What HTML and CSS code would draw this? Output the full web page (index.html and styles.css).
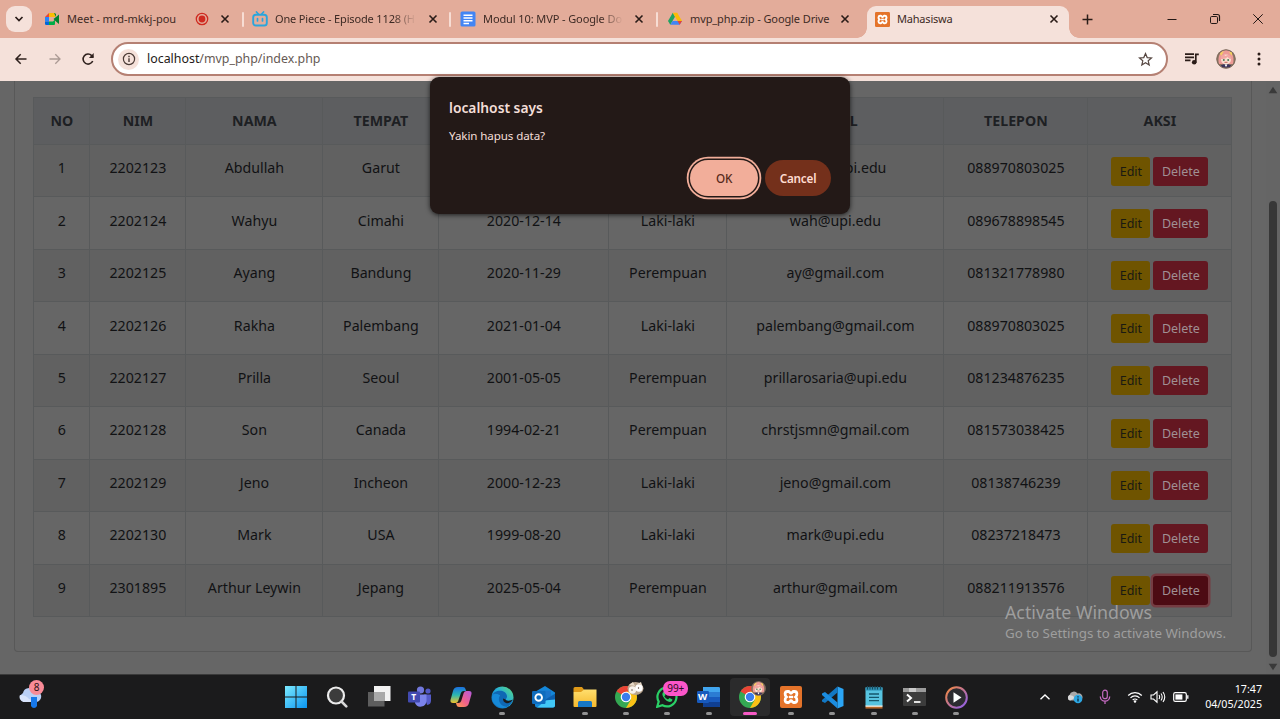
FILE: index.html
```html
<!DOCTYPE html>
<html lang="id">
<head>
<meta charset="utf-8">
<title>Mahasiswa</title>
<link rel="stylesheet" href="styles.css">
</head>
<body>
<svg class="defs" width="0" height="0">
  <defs>
    <linearGradient id="g-win" x1="0" y1="0" x2="1" y2="1"><stop offset="0" stop-color="#7cebff"/><stop offset="1" stop-color="#0a94f0"/></linearGradient>
    <linearGradient id="g-edge" x1="0" y1="1" x2="1" y2="0"><stop offset="0" stop-color="#0c59a4"/><stop offset=".5" stop-color="#1fa7e0"/><stop offset="1" stop-color="#5fe07a"/></linearGradient>
    <linearGradient id="g-cop1" x1="0" y1="0" x2="0" y2="1"><stop offset="0" stop-color="#1b6fe0"/><stop offset=".5" stop-color="#2bb7b0"/><stop offset="1" stop-color="#f0c32b"/></linearGradient>
    <linearGradient id="g-cop2" x1="1" y1="0" x2="0" y2="1"><stop offset="0" stop-color="#b45be0"/><stop offset=".55" stop-color="#f0608a"/><stop offset="1" stop-color="#ffa04a"/></linearGradient>
    <linearGradient id="g-media" x1="0" y1="0" x2="1" y2="1"><stop offset="0" stop-color="#f58a3c"/><stop offset="1" stop-color="#8a5cf0"/></linearGradient>
    <linearGradient id="g-fold" x1="0" y1="0" x2="0" y2="1"><stop offset="0" stop-color="#ffdf6e"/><stop offset="1" stop-color="#f5b92e"/></linearGradient>
    <symbol id="i-x" viewBox="0 0 10 10"><path d="M1.500 1.500l7 7M8.500 1.500l-7 7" stroke="#2a1c18" stroke-width="1.600" fill="none"/></symbol>
    <symbol id="i-xampp" viewBox="0 0 22 22"><rect width="22" height="22" rx="2" fill="#e4732a"/><path d="M7.500 5.500h1c1 0 1.500 1.800 2.500 1.800s1.500-1.800 2.500-1.800h1c3 0 3 4 1 5.500 2 1.500 2 5.500-1 5.500h-1c-1 0-1.500-1.800-2.500-1.800s-1.500 1.800-2.500 1.800h-1c-3 0-3-4-1-5.500-2-1.500-2-5.500 1-5.500z" fill="none" stroke="#fff" stroke-width="2.800"/><path d="M9 11h4" stroke="#fff" stroke-width="2.400"/></symbol>
    <symbol id="i-chrome" viewBox="0 0 22 22"><circle cx="11" cy="11" r="11" fill="#34a853"/><path d="M11 11L1.500 5.500A11 11 0 0 1 20.500 5.500z" fill="#ea4335"/><path d="M11 5.500h9.500A11 11 0 0 1 11 22l4.800-8.200z" fill="#fbc116"/><circle cx="11" cy="11" r="5.300" fill="#fff"/><circle cx="11" cy="11" r="4.200" fill="#3b7ded"/></symbol>
    <symbol id="i-face" viewBox="0 0 20 20"><circle cx="10" cy="10" r="9.500" fill="#8d7563"/><path d="M3 15C1 7 5 1 10 1s9 6 7 14z" fill="#ed9a96"/><path d="M4 4l4-2-3 5zM16 3l-3 0 3 4z" fill="#f5d35e"/><ellipse cx="10" cy="10.500" rx="5" ry="5" fill="#fbe0d0"/><path d="M4.500 10c1-5 3-5 5-3 3-2 5-1 6 3-2 0-3-1-4-2-2 2-4 2-7 2z" fill="#f2a6a2"/><circle cx="7.800" cy="11" r="1" fill="#4b7a58"/><circle cx="12.200" cy="11" r="1" fill="#4b7a58"/><path d="M8.500 13.300h3" stroke="#c46055"/><path d="M4.500 16.500l4-1.500 1.500 1 1.500-1 4 1.500-2.500 2.200h-6z" fill="#3d345c"/><path d="M8.500 15.500l1.500 2.500 1.500-2.500z" fill="#fff"/><circle cx="10" cy="10" r="9.200" fill="none" stroke="#7d6a5c" stroke-width="1"/></symbol>
  </defs>
</svg>

<div class="screen">
  <header class="tabstrip">
    <div class="tab-search"><svg width="10" height="8" viewBox="0 0 10 8"><path d="M1.500 2L5 5.500 8.500 2" fill="none" stroke="#2a1c18" stroke-width="1.700"/></svg></div>

    <div class="tab tab-meet">
      <svg class="favicon" width="16" height="16" viewBox="0 0 16 16"><path d="M1 6l4-4v4z" fill="#ea4335"/><path d="M5 2h6v4H5z" fill="#fbbc04"/><path d="M1 6h4v4.500H1z" fill="#2684fc"/><path d="M1 10.500h4V14H2.200A1.200 1.200 0 0 1 1 12.800z" fill="#0066da"/><path d="M5 10.500h4l2-2V13a1 1 0 0 1-1 1H5z" fill="#00ac47"/><path d="M10 2q2 0 2 1.500V6l3-2.500V13l-3-2.500L9.500 8 12 6z" fill="#00832d"/></svg>
      <span class="tab-title t-meet">Meet - mrd-mkkj-pou</span>
      <svg class="rec" width="14" height="14" viewBox="0 0 14 14"><circle cx="7" cy="7" r="5.700" fill="none" stroke="#cf2a20" stroke-width="1.300"/><circle cx="7" cy="7" r="3.400" fill="#cf2a20"/></svg>
      <svg class="close" width="10" height="10"><use href="#i-x"/></svg>
    </div>
    <i class="sep"></i>
    <div class="tab tab-bili">
      <svg class="favicon" width="16" height="16" viewBox="0 0 16 16"><rect x="1.200" y="3.700" width="13.600" height="10.800" rx="2.600" fill="none" stroke="#2aa5dc" stroke-width="1.900"/><path d="M4.500 1l2 2.200M11.500 1l-2 2.200M5.500 7.500v2.500M10.500 7.500v2.500" stroke="#2aa5dc" stroke-width="1.700" stroke-linecap="round"/></svg>
      <span class="tab-title fade t-bili">One Piece - Episode 1128 (H</span>
      <svg class="close" width="10" height="10"><use href="#i-x"/></svg>
    </div>
    <i class="sep"></i>
    <div class="tab tab-docs">
      <svg class="favicon" width="16" height="16" viewBox="0 0 16 16"><rect x=".5" y=".5" width="15" height="15" rx="1.600" fill="#4285f4"/><path d="M3.500 4.200h9M3.500 7h9M3.500 9.800h9M3.500 12.500h5.500" stroke="#fff" stroke-width="1.400"/></svg>
      <span class="tab-title fade t-docs">Modul 10: MVP - Google Do</span>
      <svg class="close" width="10" height="10"><use href="#i-x"/></svg>
    </div>
    <i class="sep"></i>
    <div class="tab tab-drive">
      <svg class="favicon" width="16" height="16" viewBox="0 0 16 16"><path d="M5.800 1.800L1 10l2.300 3.800L8 5.800z" fill="#1ea362"/><path d="M5.800 1.800h4.400L15 10h-4.500z" fill="#fbbc04"/><path d="M5.500 10H15l-2.300 3.800H3.300z" fill="#4285f4"/><path d="M10.500 10H15l-2.300 3.800z" fill="#ea4335"/></svg>
      <span class="tab-title t-drive">mvp_php.zip - Google Drive</span>
      <svg class="close" width="10" height="10"><use href="#i-x"/></svg>
    </div>
    <div class="tab tab-active">
      <svg class="favicon" width="15" height="15"><use href="#i-xampp"/></svg>
      <span class="tab-title t-maha">Mahasiswa</span>
      <svg class="close" width="10" height="10"><use href="#i-x"/></svg>
    </div>
    <svg class="new-tab" width="11" height="11" viewBox="0 0 11 11"><path d="M5.500.5v10M.5 5.500h10" stroke="#2a1c18" stroke-width="1.500"/></svg>
    <div class="win-controls">
      <svg width="12" height="12" viewBox="0 0 12 12"><path d="M1.500 6.500h9" stroke="#221714"/></svg>
      <svg width="12" height="12" viewBox="0 0 12 12"><rect x="1.500" y="3.500" width="7" height="7" rx="1.200" fill="none" stroke="#221714"/><path d="M4 1.500h4.500q2 0 2 2V8" fill="none" stroke="#221714" stroke-width="1.200"/></svg>
      <svg width="12" height="12" viewBox="0 0 12 12"><path d="M1.300 1.300l9.400 9.400M10.700 1.300l-9.400 9.400" stroke="#221714"/></svg>
    </div>
  </header>

  <nav class="toolbar">
    <div class="nav-icons">
      <svg width="14" height="12" viewBox="0 0 14 12"><path d="M12.500 6H2M6.700 1.200L2 6l4.700 4.800" fill="none" stroke="#2f211d" stroke-width="1.500"/></svg>
      <svg width="14" height="12" viewBox="0 0 14 12"><path d="M1.500 6H12M7.300 1.200L12 6l-4.700 4.800" fill="none" stroke="#ab9a94" stroke-width="1.300"/></svg>
      <svg width="14" height="14" viewBox="0 0 14 14"><path d="M11.700 9A5 5 0 1 1 10.700 3.600L12 5" fill="none" stroke="#2f211d" stroke-width="1.600"/><path d="M12.700 1v5H7.900z" fill="#2f211d"/></svg>
    </div>
    <div class="omnibox">
      <span class="info"><svg width="14" height="14" viewBox="0 0 14 14"><circle cx="7" cy="7" r="5.600" fill="none" stroke="#4a3a35" stroke-width="1.200"/><path d="M7 6.300v3.800M7 3.800v1.400" stroke="#4a3a35" stroke-width="1.400"/></svg></span>
      <span class="url"><b>localhost</b>/mvp_php/index.php</span>
      <svg class="star" width="15" height="15" viewBox="0 0 15 15"><path d="M7.500 1.600l1.700 4 4.300.4-3.300 2.800 1 4.200-3.700-2.200L3.800 13l1-4.200L1.500 6l4.300-.4z" fill="none" stroke="#554640" stroke-width="1.200"/></svg>
    </div>
    <svg class="queue" width="16" height="14" viewBox="0 0 16 14"><path d="M1 2.200h9M1 5.300h9M1 8.400h5.500M11.800 10.500V2.400h3" fill="none" stroke="#2a1c18" stroke-width="1.700"/><circle cx="10.200" cy="10.300" r="2.300" fill="#2a1c18"/></svg>
    <svg class="avatar" width="20" height="20"><use href="#i-face"/></svg>
    <svg class="kebab" width="4" height="14" viewBox="0 0 4 14"><circle cx="2" cy="2" r="1.500" fill="#2a1c18"/><circle cx="2" cy="7" r="1.500" fill="#2a1c18"/><circle cx="2" cy="12" r="1.500" fill="#2a1c18"/></svg>
  </nav>

  <main class="page">
    <section class="card">
      <table class="students">
        <colgroup><col class="c-no"><col class="c-nim"><col class="c-nama"><col class="c-tempat"><col class="c-tgl"><col class="c-gender"><col class="c-email"><col class="c-telp"><col class="c-aksi"></colgroup>
        <thead><tr><th>NO</th><th>NIM</th><th>NAMA</th><th>TEMPAT</th><th></th><th></th><th>EMAIL</th><th>TELEPON</th><th>AKSI</th></tr></thead>
        <tbody>
          <tr><td>1</td><td>2202123</td><td>Abdullah</td><td>Garut</td><td></td><td></td><td class="short">upi.edu</td><td>088970803025</td><td><button class="btn edit">Edit</button><button class="btn delete">Delete</button></td></tr>
          <tr><td>2</td><td>2202124</td><td>Wahyu</td><td>Cimahi</td><td>2020-12-14</td><td>Laki-laki</td><td>wah@upi.edu</td><td>089678898545</td><td><button class="btn edit">Edit</button><button class="btn delete">Delete</button></td></tr>
          <tr><td>3</td><td>2202125</td><td>Ayang</td><td>Bandung</td><td>2020-11-29</td><td>Perempuan</td><td>ay@gmail.com</td><td>081321778980</td><td><button class="btn edit">Edit</button><button class="btn delete">Delete</button></td></tr>
          <tr><td>4</td><td>2202126</td><td>Rakha</td><td>Palembang</td><td>2021-01-04</td><td>Laki-laki</td><td>palembang@gmail.com</td><td>088970803025</td><td><button class="btn edit">Edit</button><button class="btn delete">Delete</button></td></tr>
          <tr><td>5</td><td>2202127</td><td>Prilla</td><td>Seoul</td><td>2001-05-05</td><td>Perempuan</td><td>prillarosaria@upi.edu</td><td>081234876235</td><td><button class="btn edit">Edit</button><button class="btn delete">Delete</button></td></tr>
          <tr><td>6</td><td>2202128</td><td>Son</td><td>Canada</td><td>1994-02-21</td><td>Perempuan</td><td>chrstjsmn@gmail.com</td><td>081573038425</td><td><button class="btn edit">Edit</button><button class="btn delete">Delete</button></td></tr>
          <tr><td>7</td><td>2202129</td><td>Jeno</td><td>Incheon</td><td>2000-12-23</td><td>Laki-laki</td><td>jeno@gmail.com</td><td>08138746239</td><td><button class="btn edit">Edit</button><button class="btn delete">Delete</button></td></tr>
          <tr><td>8</td><td>2202130</td><td>Mark</td><td>USA</td><td>1999-08-20</td><td>Laki-laki</td><td>mark@upi.edu</td><td>08237218473</td><td><button class="btn edit">Edit</button><button class="btn delete">Delete</button></td></tr>
          <tr><td>9</td><td>2301895</td><td>Arthur Leywin</td><td>Jepang</td><td>2025-05-04</td><td>Perempuan</td><td>arthur@gmail.com</td><td>088211913576</td><td><button class="btn edit">Edit</button><button class="btn delete focused">Delete</button></td></tr>
        </tbody>
      </table>
    </section>
    <aside class="scrollbar">
      <svg width="10" height="8" viewBox="0 0 10 8"><path d="M5 .8L9.300 7.200H.7z" fill="#3a3a3a"/></svg>
      <i class="thumb"></i>
      <svg width="10" height="8" viewBox="0 0 10 8"><path d="M5 7.200L9.300.8H.7z" fill="#3a3a3a"/></svg>
    </aside>
    <div class="watermark"><p class="wm-title">Activate Windows</p><p class="wm-sub">Go to Settings to activate Windows.</p></div>
  </main>

  <footer class="taskbar">
    <div class="weather">
      <svg width="24" height="22" viewBox="0 0 24 22"><path d="M5.500 16A5 5 0 0 1 5 7a6 6 0 0 1 11-2 5 5 0 0 1 3 11z" fill="#b9cff5"/><path d="M5.500 16A5 5 0 0 1 2 9q6 0 9 4l8 3z" fill="#d8e4fb"/><path d="M13 11h6v9q-1 2-3 2t-3-2z" fill="#1778ea"/></svg>
      <span class="weather-badge">8</span>
    </div>
    <div class="apps">
      <div class="app"><svg width="22" height="22" viewBox="0 0 22 22"><path d="M0 0h10.500v10.500H0zM11.500 0H22v10.500H11.500zM0 11.500h10.500V22H0zM11.500 11.500H22V22H11.500z" fill="url(#g-win)"/></svg></div>
      <div class="app"><svg width="22" height="22" viewBox="0 0 22 22"><circle cx="10" cy="9.500" r="8" fill="#3c3c3c" stroke="#ececec" stroke-width="2.200"/><path d="M15.500 15.500l4.800 4.800" stroke="#d8d8d8" stroke-width="2.600" stroke-linecap="round"/></svg></div>
      <div class="app"><svg width="24" height="22" viewBox="0 0 24 22"><rect x="7" y="0" width="16.500" height="15" fill="#f2f2f2"/><rect x="1" y="6" width="16.500" height="14.500" fill="#5e5e5e"/><path d="M7 6h10.500v9H7z" fill="#a9a9a9"/></svg></div>
      <div class="app"><svg width="24" height="22" viewBox="0 0 24 22"><circle cx="12.500" cy="4" r="3.600" fill="#7278dc"/><circle cx="20" cy="5" r="2.600" fill="#5359c5"/><path d="M16 8.500h7v6q0 4-4 4.500z" fill="#555bc8"/><path d="M7 8.500h11.500v6.500a6 6 0 0 1-11.500 2z" fill="#7b83eb"/><rect x="0" y="5.500" width="12" height="11" rx="1" fill="#424ab0"/><text x="3.300" y="14" class="glyph-t">T</text></svg></div>
      <div class="app"><svg width="22" height="22" viewBox="0 0 22 22"><path d="M8 1h5q2 0 2.500 2l.6 2h-2.500q-2 0-2.700 2L8.200 15Q7.500 17 5.500 17H3q-3 0-2.500-3L3 5q1-4 5-4z" fill="url(#g-cop1)"/><path d="M14 21H9q-2 0-2.500-2L6 17h2.500q2 0 2.700-2l2.500-8q.7-2 2.700-2H19q3 0 2.500 3L19 17q-1 4-5 4z" fill="url(#g-cop2)"/></svg></div>
      <div class="app run"><svg width="23" height="23" viewBox="0 0 23 23"><circle cx="11.500" cy="11.500" r="11" fill="url(#g-edge)"/><path d="M1 10C3 3 15 3 16 10q.3 2-1.500 3.500Q16 16 22 14c-3 8-12 10-16 5-3-4-1-8 3-9.500Q4 7 1 10z" fill="#0f68b4"/><path d="M9 9.500c-3 4 0 11 7 11.500C8 25-2 16 2 8.500q3-2 7 1z" fill="#1689d8"/><path d="M14.500 13.500Q16 16 22 13.500q-3 4.500-7 3.500-3-1-3-4.500z" fill="#1b1b1c"/></svg></div>
      <div class="app"><svg width="24" height="22" viewBox="0 0 24 22"><path d="M2 6.500L13 0l10 6.500v13q0 2-2 2H5q-2 0-2-2z" fill="#1487d9"/><path d="M7 4.500h12v9H7z" fill="#1b74c9"/><path d="M23 7.500v12q0 2-2 2H5z" fill="#41c7f5"/><path d="M12 14.500L23 7.500v6z" fill="#0c5fae"/><rect x="0" y="5" width="13.500" height="13" rx="1.200" fill="#0f6cbd"/><circle cx="6.700" cy="11.500" r="3.300" fill="none" stroke="#fff" stroke-width="1.900"/></svg></div>
      <div class="app run"><svg width="24" height="22" viewBox="0 0 24 22"><path d="M.5 2.500Q.5 1 2 1h7l2 2.500L9 6H.5z" fill="#e09a18"/><path d="M.5 6H8l3-2.500h12.500V20q0 1-1 1h-21q-1 0-1-1z" fill="url(#g-fold)"/><path d="M5 21v-4.500q0-1.500 1.500-1.500h11q1.500 0 1.500 1.500V21z" fill="#1677c5"/></svg></div>
      <div class="app run"><svg width="22" height="22"><use href="#i-chrome"/></svg><svg class="profile" width="17" height="15" viewBox="0 0 17 15"><ellipse cx="8.500" cy="7.500" rx="8" ry="6.500" fill="#b9a58f"/><circle cx="5.500" cy="9" r="3.700" fill="#f7f2ec"/><circle cx="12" cy="7" r="3.700" fill="#fff"/><path d="M2 4l4-3 2 4M10 3l4-2 1 3" fill="#e8dac8"/><circle cx="5" cy="9" r=".7" fill="#503a30"/><circle cx="11.500" cy="7" r=".7" fill="#503a30"/></svg></div>
      <div class="app run"><svg width="22" height="22" viewBox="0 0 22 22"><path d="M1.200 20.800l1.500-5.200A9.500 9.500 0 1 1 6.500 19.300z" fill="#1b1b1c" stroke="#2ad166" stroke-width="2.200"/><path d="M7.500 6q-2 1.500-.5 4.500 3 5 7 5.500 2.500-.3 2.500-2.500l-3-1.500-1.500 1.500q-2.500-1-3.700-3.300L9.500 9l-1-3z" fill="#2ad166"/></svg><span class="count">99+</span></div>
      <div class="app run"><svg width="23" height="22" viewBox="0 0 23 22"><rect x="6" y="1" width="17" height="20" rx="1.500" fill="#2b7cd3"/><path d="M6 1h15.500Q23 1 23 2.500V6H6z" fill="#41a5ee"/><path d="M6 11h17v5H6z" fill="#185abd"/><path d="M6 16h17v3.500q0 1.500-1.500 1.500h-14Q6 21 6 19.500z" fill="#103f91"/><rect x="0" y="5" width="12" height="12" rx="1.200" fill="#185abd"/><text x="1" y="14.300" class="glyph-w">W</text></svg></div>
      <div class="app current"><svg width="22" height="22"><use href="#i-chrome"/></svg><svg class="profile" width="15" height="15"><use href="#i-face"/></svg></div>
      <div class="app run"><svg width="22" height="22"><use href="#i-xampp"/></svg></div>
      <div class="app run"><svg width="23" height="23" viewBox="0 0 23 23"><path d="M16.500.5L22.500 3v17l-6 2.500z" fill="#2ba5f5"/><path d="M16.500.5v6L4 17 1 15.500 1 14z" fill="#1278c4"/><path d="M16.500 22.500v-6L4 6 1 7.500V9z" fill="#1b8de0"/></svg></div>
      <div class="app run"><svg width="18" height="23" viewBox="0 0 18 23"><rect x=".5" y="1.500" width="17" height="18.500" fill="#57c4e0"/><path d="M.5 1.500h17v3H.5z" fill="#2b8eb0"/><path d="M2.500 0v3.500M5 0v3.500M7.500 0v3.500M10 0v3.500M12.500 0v3.500M15.500 0v3.500" stroke="#17485c"/><path d="M4 8h10M4 11.300h10M4 14.600h10" stroke="#14576c" stroke-width="1.300"/><path d="M.5 19.500h17V21H.5z" fill="#f5f0e6"/><path d="M.5 20.800h17v1.800H.5z" fill="#b7682a"/></svg></div>
      <div class="app run"><svg width="23" height="18" viewBox="0 0 23 18"><rect width="23" height="18" rx="1" fill="#3c3c3c"/><path d="M0 0h23v4H0z" fill="#9b9b9b"/><path d="M6 0h7v4H6z" fill="#c8c8c8"/><path d="M4 6.500l4 3.500-4 3.500" fill="none" stroke="#fff" stroke-width="2"/><path d="M11 14h6.500" stroke="#fff" stroke-width="1.700"/></svg></div>
      <div class="app run"><svg width="23" height="23" viewBox="0 0 23 23"><circle cx="11.500" cy="11.500" r="10.300" fill="#2c2b30" stroke="url(#g-media)" stroke-width="2"/><path d="M8.500 6.300l8 5.200-8 5.200z" fill="#fff"/></svg></div>
    </div>
    <div class="tray">
      <svg class="chev" width="12" height="8" viewBox="0 0 12 8"><path d="M1.500 6.300L6 2l4.500 4.300" fill="none" stroke="#fff" stroke-width="1.400"/></svg>
      <svg class="cloud" width="16" height="14" viewBox="0 0 16 14"><path d="M3 10.500A3 3 0 0 1 2.500 5a4.500 4.500 0 0 1 8-1.500A3.500 3.500 0 0 1 13 10.500z" fill="#a9a9a9"/><path d="M3 10.500A3 3 0 0 1 2.500 5q3 0 6 3z" fill="#d9d9d9"/><circle cx="11" cy="9" r="4.300" fill="#2da7e3"/><path d="M11 8.500v3M11 6.200v1.300" stroke="#0b2a3c" stroke-width="1.300"/></svg>
      <svg class="mic" width="12" height="16" viewBox="0 0 12 16"><rect x="3.700" y="1.200" width="4.600" height="8.500" rx="2.300" fill="none" stroke="#c46ac0" stroke-width="1.200"/><path d="M1.300 7.500a4.700 4.700 0 0 0 9.400 0M6 12.300V15" fill="none" stroke="#c46ac0" stroke-width="1.300"/></svg>
      <svg class="wifi" width="16" height="12" viewBox="0 0 16 12"><path d="M1.200 4.500a9.500 9.500 0 0 1 13.600 0M3.500 6.800a6.300 6.300 0 0 1 9 0M5.700 9a3.200 3.200 0 0 1 4.600 0" fill="none" stroke="#fff" stroke-width="1.200"/><circle cx="8" cy="10.500" r="1.200" fill="#fff"/></svg>
      <svg class="sound" width="16" height="14" viewBox="0 0 16 14"><path d="M1 5h2.500L7 1.800v10.400L3.500 9H1z" fill="none" stroke="#fff" stroke-width="1.100"/><path d="M9 5q1.300 2 0 4M11 3.500q2.400 3.500 0 7M13 2q3.500 5 0 10" fill="none" stroke="#fff" stroke-width="1.100"/></svg>
      <svg class="battery" width="16" height="10" viewBox="0 0 16 10"><rect x=".7" y=".7" width="12.600" height="8.600" rx="1.600" fill="none" stroke="#fff" stroke-width="1.200"/><rect x="2.400" y="2.400" width="7" height="5.200" fill="#fff"/><path d="M14.800 3.300v3.400" stroke="#fff" stroke-width="1.300"/></svg>
      <div class="clock"><span class="time">17:47</span><span class="date">04/05/2025</span></div>
    </div>
  </footer>

  <div class="dialog" role="dialog">
    <h1>localhost says</h1>
    <p>Yakin hapus data?</p>
    <div class="actions"><button class="ok">OK</button><button class="cancel">Cancel</button></div>
  </div>
</div>
</body>
</html>
```

FILE: styles.css
```css
* { box-sizing: border-box; }
body { margin: 0; font-family: "Noto Sans", "Open Sans", sans-serif; overflow: hidden; }
svg { display: block; flex: none; }
button { font-family: inherit; border: 0; margin: 0; padding: 0; }
.defs { position: absolute; }
.screen { position: relative; width: 1280px; height: 719px; display: flex; flex-direction: column; }

/* Tab strip */
.tabstrip { height: 38px; flex: none; background: #e3ac9a; display: flex; align-items: center; padding-left: 6px; }
.tab-search { width: 26px; height: 26px; border-radius: 9px; background: #f5e1da; display: flex; align-items: center; justify-content: center; flex: none; }
.tab { display: flex; align-items: center; height: 38px; flex: none; }
.tab-title { font-size: 11px; color: #3d2a24; white-space: nowrap; overflow: hidden; line-height: 18px; margin-left: 7px; flex: none; }
.fade { -webkit-mask-image: linear-gradient(90deg, #000 84%, transparent 100%); mask-image: linear-gradient(90deg, #000 84%, transparent 100%); }
.tab .close { margin-left: auto; }
.sep { width: 2px; height: 15px; background: #f7ddd4; flex: none; border-radius: 1px; }
.tab-meet { width: 210px; padding: 0 12px 0 12px; }
.tab-meet .rec { margin-left: 18px; }
.tab-bili { width: 205px; padding: 0 11px 0 8px; }
.tab-docs { width: 205px; padding: 0 12px 0 9px; }
.tab-drive { width: 209px; padding: 0 17px 0 9px; }
.t-meet { width: 110px; }
.t-bili { width: 141px; letter-spacing: -.15px; }
.t-docs { width: 140px; letter-spacing: -.1px; }
.t-drive { width: 142px; letter-spacing: -.1px; }
.t-maha { letter-spacing: -.2px; }
.tab-active { position: relative; width: 202px; height: 32px; align-self: flex-end; background: #f5e1da; border-radius: 9px 9px 0 0; padding: 0 10px 6px 8px; }
.tab-active::before, .tab-active::after { content: ""; position: absolute; bottom: 0; width: 10px; height: 10px; }
.tab-active::before { left: -10px; background: radial-gradient(circle at 0 0, transparent 9.500px, #f5e1da 10px); }
.tab-active::after { right: -10px; background: radial-gradient(circle at 100% 0, transparent 9.500px, #f5e1da 10px); }
.new-tab { margin-left: 13px; }
.win-controls { display: flex; gap: 31px; margin-left: auto; padding-right: 16px; }

/* Toolbar */
.toolbar { height: 43px; flex: none; background: #f5e1da; display: flex; align-items: center; padding: 0 0 1px 14px; }
.nav-icons { display: flex; align-items: center; gap: 19.500px; width: 97px; }
.omnibox { width: 1057px; height: 34px; border: 2px solid #b58073; border-radius: 17px; background: #fff; display: flex; align-items: center; padding: 0 13px 0 5px; flex: none; }
.info { width: 21px; height: 21px; border-radius: 50%; background: #f5e1da; display: flex; align-items: center; justify-content: center; }
.url { font-size: 12.400px; margin-left: 8px; color: #665954; line-height: 20px; }
.url b { font-weight: 400; color: #241a17; }
.star { margin-left: auto; }
.queue { margin-left: 16px; }
.avatar { margin-left: 16px; }
.kebab { margin-left: 21px; }

/* Page behind the dialog */
.page { position: relative; height: 593px; flex: none; background: #666; display: flex; overflow: hidden; }
.card { width: 1238px; height: 571px; margin-left: 14px; border: 1px solid #585858; border-top: 0; border-radius: 0 0 4px 4px; padding: 16px 0 0 18.400px; flex: none; }
.students { width: 1198px; table-layout: fixed; border-collapse: collapse; font-size: 14.200px; line-height: 22px; color: #111214; text-align: center; }
.c-no { width: 56px; } .c-nim { width: 96px; } .c-nama { width: 137px; } .c-tempat { width: 116px; } .c-tgl { width: 170px; }
.c-gender { width: 118px; } .c-email { width: 217px; } .c-telp { width: 144px; } .c-aksi { width: 144px; }
.students th, .students td { border: 1px solid #585a5b; padding: 0; white-space: nowrap; }
.students th { height: 47px; background: #5d5e60; color: #1d2023; font-size: 14.200px; }
.students td { height: 52.450px; vertical-align: top; padding-top: 12.200px; }
.students td:last-child { padding-top: 11.500px; }
.students td.short { text-align: right; padding-right: 57px; }
.students tbody tr:nth-child(odd) { background: #616161; }
.btn { height: 29px; border-radius: 3px; font-size: 12.500px; line-height: 29px; vertical-align: top; }
.btn.edit { width: 39px; background: #6f5400; color: #1a1a12; margin-right: 3px; }
.btn.delete { width: 55px; background: #641721; color: #a09094; }
.btn.focused { background: #4c0b13; box-shadow: 0 0 0 2.500px #753c42; }
.scrollbar { width: 14px; margin-left: auto; display: flex; flex-direction: column; align-items: center; padding: 5px 0 3px; background: #656565; }
.thumb { width: 8px; height: 456px; border-radius: 4px; background: #373737; margin: 107px 0 6px; }
.watermark { position: absolute; left: 1005px; top: 519px; color: #9e9e9e; }
.watermark p { margin: 0; white-space: nowrap; }
.wm-title { font-size: 17.800px; line-height: 25px; }
.wm-sub { font-size: 13.350px; line-height: 17px; }

/* Taskbar */
.taskbar { height: 45px; flex: none; background: #1b1b1c; border-top: 1px solid #3a3a3a; display: flex; align-items: center; }
.weather { position: relative; margin-left: 18px; width: 258px; }
.weather-badge { position: absolute; left: 11px; top: -6px; width: 15px; height: 15px; border-radius: 50%; background: #f98b97; color: #2b1114; font-size: 10px; line-height: 15px; text-align: center; }
.apps { display: flex; gap: 1.250px; }
.app { position: relative; width: 40px; height: 38px; display: flex; align-items: center; justify-content: center; border-radius: 4px; }
.app.run::after, .app.current::after { content: ""; position: absolute; bottom: 1px; left: 17px; width: 6px; height: 3px; border-radius: 2px; background: #929292; }
.app.current { background: #2b2b2c; }
.app.current::after { left: 13px; width: 14px; background: #f65ac5; }
.profile { position: absolute; left: 21px; top: 3px; }
.count { position: absolute; left: 16px; top: 3px; width: 25px; height: 15px; border-radius: 7px; background: #fb55c9; color: #2c0b22; font-size: 10px; line-height: 15px; text-align: center; z-index: 1; }
.glyph-t { font: bold 8.500px "Noto Sans", sans-serif; fill: #fff; }
.glyph-w { font: bold 9.500px "Noto Sans", sans-serif; fill: #fff; }
.tray { display: flex; align-items: center; margin-left: auto; padding-right: 18px; color: #fff; }
.cloud { margin-left: 16px; }
.mic { margin-left: 16px; }
.wifi { margin-left: 16px; }
.sound { margin-left: 7px; }
.battery { margin-left: 7px; }
.clock { width: 66px; margin-left: 7px; display: flex; flex-direction: column; align-items: flex-end; font-size: 10.700px; line-height: 15px; white-space: nowrap; }

/* Confirm dialog */
.dialog { position: absolute; left: 430px; top: 77px; width: 420px; height: 137px; border-radius: 9px; background: #231917; color: #f3ded8; padding: 21px 19px 0; box-shadow: 0 1px 5px rgba(0, 0, 0, .7); }
.dialog h1 { margin: 0; font-size: 13.800px; line-height: 20px; font-weight: 600; }
.dialog p { margin: 9px 0 0; font-size: 11.600px; line-height: 18px; letter-spacing: -.1px; }
.actions { display: flex; justify-content: flex-end; gap: 7px; margin-top: 15px; }
.actions button { height: 36px; border-radius: 18px; font-size: 11.700px; font-weight: 600; letter-spacing: -.2px; }
.ok { width: 68px; background: #f2ae9a; color: #56291b; box-shadow: 0 0 0 1.500px #231917, 0 0 0 3.300px #f2ae9a; }
.actions .ok { font-weight: 500; }
.cancel { width: 66px; background: #74301b; color: #ffdbd0; }
```
